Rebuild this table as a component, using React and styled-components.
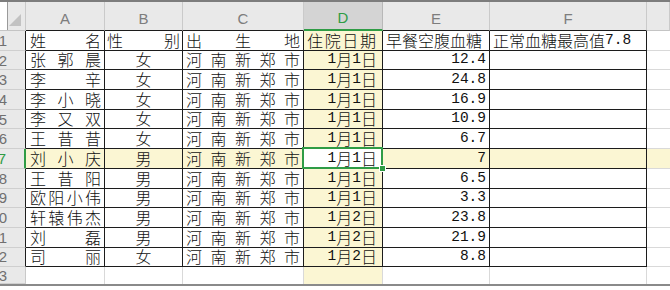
import React from 'react';
import styled, { createGlobalStyle, css } from 'styled-components';

const GREEN = '#2f9c45';
const HL = '#fbf6d3';
const GRID = '#d9d9d9';
const INK = '#1c1c1c';

const GlobalStyle = createGlobalStyle`
  html, body {
    margin: 0;
    background: #fff;
    overflow: hidden;
  }
`;

const Frame = styled.div`
  width: 670px;
  height: 290px;
  overflow: hidden;
  background: #fff;
  border-top: 2px solid #7d7d7d;
  box-sizing: border-box;
`;

const Sheet = styled.div`
  display: grid;
  grid-template-columns: 26px 79px 78px 121px 79px 107px 157px 1fr;
  grid-template-rows: 29px repeat(12, 19.7px) 17px;
  border-bottom: 2px solid #8a8a8a;
  font-family: "Noto Sans CJK SC", sans-serif;
`;

const Corner = styled.div`
  display: flex;
  align-items: flex-end;
  justify-content: flex-end;
  padding: 0 4px 4px 0;
  box-sizing: border-box;
  background: linear-gradient(to right, #fff 0 7px, #9a9a9a 7px 8px, #e9e9e9 8px);
  border-right: 1px solid #c9c9c9;
  border-bottom: 1px solid #c4c4c4;
`;

const ColHead = styled.div`
  display: flex;
  align-items: flex-end;
  justify-content: center;
  padding-bottom: 4px;
  box-sizing: border-box;
  font-family: "Liberation Sans", sans-serif;
  font-size: 15px;
  line-height: 1;
  color: ${p => (p.$active ? GREEN : '#7d7d7d')};
  background: ${p => (p.$active ? '#d4d4d4' : '#e9e9e9')};
  border-right: 1px solid ${p => (p.$active ? '#b8b8b8' : '#cacaca')};
  border-bottom: ${p =>
    p.$active ? `2px solid ${GREEN}` : p.$edge ? `1px solid ${INK}` : '1px solid #c4c4c4'};
`;

const RowHead = styled.div`
  display: flex;
  align-items: center;
  justify-content: flex-end;
  padding-right: 18px;
  overflow: hidden;
  white-space: nowrap;
  box-sizing: border-box;
  font-family: "Liberation Sans", sans-serif;
  font-size: 15px;
  color: ${p => (p.$active ? GREEN : '#707070')};
  background: #e9e9e9;
  border-bottom: 1px solid #cfcfcf;
  border-right: ${p =>
    p.$active ? `2px solid ${GREEN}` : p.$edge ? `1px solid ${INK}` : '1px solid #c9c9c9'};
`;

const justify = {
  dist: 'space-between',
  center: 'center',
  right: 'flex-end',
  left: 'flex-start',
};

const Cell = styled.div`
  display: flex;
  align-items: flex-end;
  justify-content: ${p => justify[p.$align || 'left']};
  box-sizing: border-box;
  padding: 0 ${p => p.$padR ?? 3}px 1px ${p => p.$padL ?? 3}px;
  font-size: 16px;
  font-weight: 300;
  line-height: 17px;
  color: #111;
  white-space: nowrap;
  background: ${p => (p.$hl ? HL : '#fff')};
  border-right: ${p => (p.$last ? 'none' : `1px solid ${p.$edge ? INK : GRID}`)};
  border-bottom: ${p => (p.$bottom ? 'none' : `1px solid ${p.$edge ? INK : GRID}`)};

  ${p =>
    p.$active &&
    css`
      position: relative;
      z-index: 1;
      background: #fff;

      &::after {
        content: '';
        position: absolute;
        left: -2px;
        top: -2px;
        right: -1px;
        bottom: -1px;
        border: 2px solid ${GREEN};
      }

      &::before {
        content: '';
        position: absolute;
        right: -4px;
        bottom: -4px;
        width: 5px;
        height: 5px;
        background: ${GREEN};
        border: 1px solid #fff;
        z-index: 2;
      }
    `}
`;

const Num = styled.span`
  font-family: "Liberation Mono", monospace;
  font-size: 14.5px;
  font-weight: 400;
`;

const Glyph = styled.span``;

const letters = ['A', 'B', 'C', 'D', 'E', 'F', ''];

const rows = [
  ['姓名', '性别', '出生地', '住院日期', '早餐空腹血糖', '正常血糖最高值7.8'],
  ['张郭晨', '女', '河南新郑市', '1月1日', '12.4', ''],
  ['李辛', '女', '河南新郑市', '1月1日', '24.8', ''],
  ['李小晓', '女', '河南新郑市', '1月1日', '16.9', ''],
  ['李又双', '女', '河南新郑市', '1月1日', '10.9', ''],
  ['王昔昔', '女', '河南新郑市', '1月1日', '6.7', ''],
  ['刘小庆', '男', '河南新郑市', '1月1日', '7', ''],
  ['王昔阳', '男', '河南新郑市', '1月1日', '6.5', ''],
  ['欧阳小伟', '男', '河南新郑市', '1月1日', '3.3', ''],
  ['轩辕伟杰', '男', '河南新郑市', '1月2日', '23.8', ''],
  ['刘磊', '男', '河南新郑市', '1月2日', '21.9', ''],
  ['司丽', '女', '河南新郑市', '1月2日', '8.8', ''],
];

const headAlign = ['dist', 'dist', 'dist', 'dist', 'left', 'left'];
const bodyAlign = ['dist', 'center', 'dist', 'right', 'right', 'left'];
const padLeft = [4, 2, 3, 3, 3, 3];
const padRight = [3, 2, 3, 5, 3, 3];

const ACTIVE_ROW = 7;
const ACTIVE_COL = 3;

const renderText = (text, align) => {
  if (align === 'dist') {
    return text.split('').map((ch, i) => <Glyph key={i}>{ch}</Glyph>);
  }
  return text
    .split(/([0-9.]+)/)
    .filter(Boolean)
    .map((part, i) => (/^[0-9.]+$/.test(part) ? <Num key={i}>{part}</Num> : <span key={i}>{part}</span>));
};

const App = () => (
  <Frame>
    <GlobalStyle />
    <Sheet>
      <Corner>
        <svg width="12" height="12" viewBox="0 0 12 12">
          <polygon points="12,0 12,12 0,12" fill="#c2c2c2" />
        </svg>
      </Corner>
      {letters.map((l, i) => (
        <ColHead key={i} $active={i === ACTIVE_COL} $edge={i < 6}>
          {l}
        </ColHead>
      ))}

      {rows.map((row, r) => {
        const num = r + 1;
        const rowHl = num === ACTIVE_ROW;
        return (
          <React.Fragment key={r}>
            <RowHead $edge $active={rowHl}>{num}</RowHead>
            {row.map((text, c) => {
              const align = r === 0 ? headAlign[c] : bodyAlign[c];
              const active = rowHl && c === ACTIVE_COL;
              return (
                <Cell
                  key={c}
                  $edge
                  $align={align}
                  $padL={padLeft[c]}
                  $padR={r === 0 && c === 3 ? 6 : padRight[c]}
                  $hl={rowHl || c === ACTIVE_COL}
                  $active={active}
                >
                  {renderText(text, align)}
                </Cell>
              );
            })}
            <Cell $last $hl={rowHl} />
          </React.Fragment>
        );
      })}

      <RowHead>13</RowHead>
      {letters.map((l, i) => (
        <Cell key={i} $bottom $last={i === 6} $hl={i === ACTIVE_COL} />
      ))}
    </Sheet>
  </Frame>
);

export default App;
